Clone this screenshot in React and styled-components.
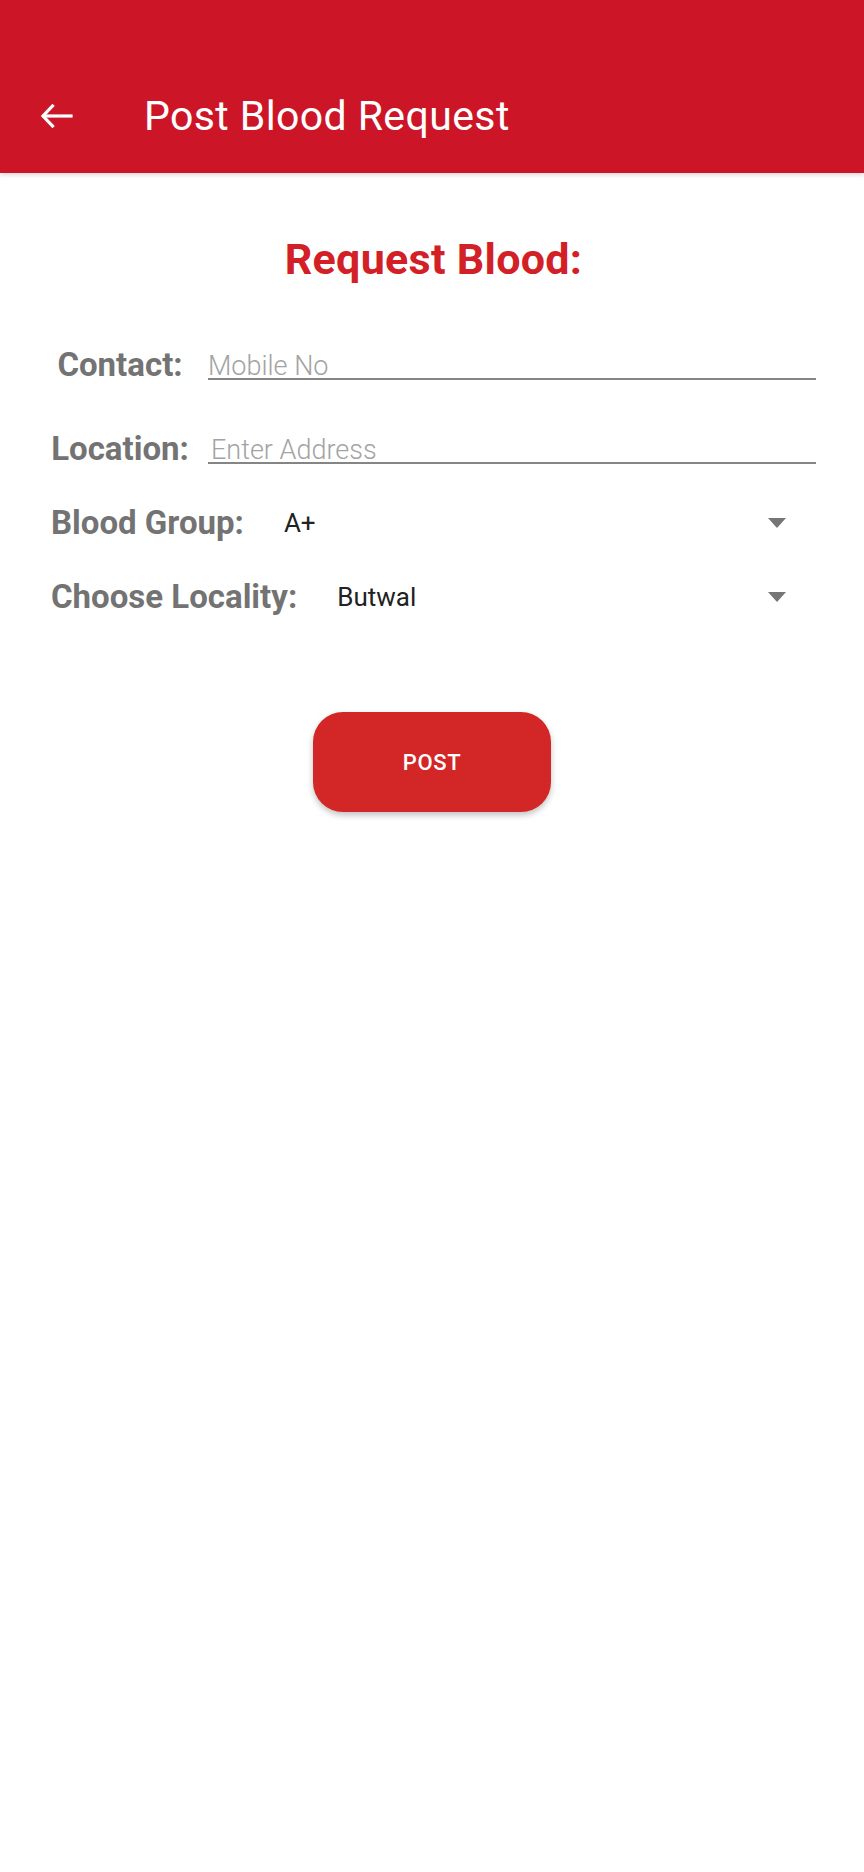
import React from 'react'
import styled, { createGlobalStyle } from 'styled-components'

const GlobalStyle = createGlobalStyle`
  body {
    margin: 0;
    background: #ffffff;
    font-family: Roboto, "Liberation Sans", sans-serif;
  }
`

const Page = styled.div`
  width: 864px;
  min-height: 1872px;
  background: #ffffff;
`

const AppBar = styled.header`
  height: 173px;
  padding-top: 59px;
  box-sizing: border-box;
  background: #cc1628;
  display: flex;
  align-items: center;
  box-shadow: 0 2px 4px rgba(0, 0, 0, 0.15);
`

const BackButton = styled.button`
  border: 0;
  background: transparent;
  padding: 0;
  margin-left: 40px;
  width: 33px;
  height: 33px;
  display: flex;
  align-items: center;
  justify-content: center;
  color: #ffffff;
`

const Title = styled.h1`
  margin: 0 0 0 71px;
  font-size: 41px;
  font-weight: 400;
  color: #ffffff;
  letter-spacing: 0.4px;
`

const Content = styled.main`
  display: flex;
  flex-direction: column;
  padding: 0 48px 0 51px;
`

const Heading = styled.h2`
  margin: 61px 0 0;
  text-align: center;
  font-size: 43px;
  font-weight: 700;
  color: #d32027;
  line-height: 50px;
  letter-spacing: 0.3px;
`

const FieldGrid = styled.div`
  display: grid;
  grid-template-columns: 138px 1fr;
  grid-auto-rows: 44px;
  column-gap: 19px;
  row-gap: 40px;
  margin-top: 59px;
`

const Label = styled.label`
  font-size: 33px;
  font-weight: 700;
  color: #737373;
  line-height: 44px;
  text-align: ${p => (p.$center ? 'center' : 'left')};
  white-space: nowrap;
`

const TextInput = styled.input`
  box-sizing: border-box;
  align-self: start;
  height: 37px;
  border: 0;
  border-bottom: 2px solid #858585;
  outline: none;
  background: transparent;
  font-family: Roboto, "Liberation Sans", sans-serif;
  font-size: 27px;
  color: #222;
  padding: 10px 0 0 ${p => p.$indent || 0}px;

  &::placeholder {
    color: #a3a3a3;
    font-weight: 300;
  }
`

const SpinnerRow = styled.div`
  display: flex;
  align-items: center;
  height: 44px;
  margin-top: 30px;
`

const Spinner = styled.div`
  flex: 1;
  display: flex;
  align-items: center;
  justify-content: space-between;
  padding: 0 30px 0 40px;
`

const SpinnerValue = styled.span`
  font-size: 26px;
  color: #222222;
`

const Caret = styled.span`
  width: 0;
  height: 0;
  border-left: 9.5px solid transparent;
  border-right: 9.5px solid transparent;
  border-top: 10px solid #767676;
`

const PostButton = styled.button`
  align-self: center;
  margin: 93px 0 0 -3px;
  width: 238px;
  height: 100px;
  border: 0;
  border-radius: 30px;
  background: #d32626;
  color: #ffffff;
  font-family: Roboto, "Liberation Sans", sans-serif;
  font-size: 22px;
  font-weight: 500;
  letter-spacing: 0.6px;
  box-shadow: 0 3px 6px rgba(0, 0, 0, 0.25);
`

function ArrowBack() {
  return (
    <svg width="33" height="24" viewBox="0 0 33 24" fill="none" stroke="currentColor" strokeWidth="3.2" strokeLinecap="square">
      <path d="M31 12H4" />
      <path d="M12.5 2L3 12l9.5 10" strokeLinejoin="miter" />
    </svg>
  )
}

function Dropdown({ label, value }) {
  return (
    <SpinnerRow>
      <Label>{label}</Label>
      <Spinner>
        <SpinnerValue>{value}</SpinnerValue>
        <Caret />
      </Spinner>
    </SpinnerRow>
  )
}

export default function App() {
  return (
    <Page>
      <GlobalStyle />
      <AppBar>
        <BackButton aria-label="Back">
          <ArrowBack />
        </BackButton>
        <Title>Post Blood Request</Title>
      </AppBar>
      <Content>
        <Heading>Request Blood:</Heading>
        <FieldGrid>
          <Label $center>Contact:</Label>
          <TextInput placeholder="Mobile No" />
          <Label $center>Location:</Label>
          <TextInput placeholder="Enter Address" $indent={3} />
        </FieldGrid>
        <Dropdown label="Blood Group:" value="A+" />
        <Dropdown label="Choose Locality:" value="Butwal" />
        <PostButton>POST</PostButton>
      </Content>
    </Page>
  )
}
